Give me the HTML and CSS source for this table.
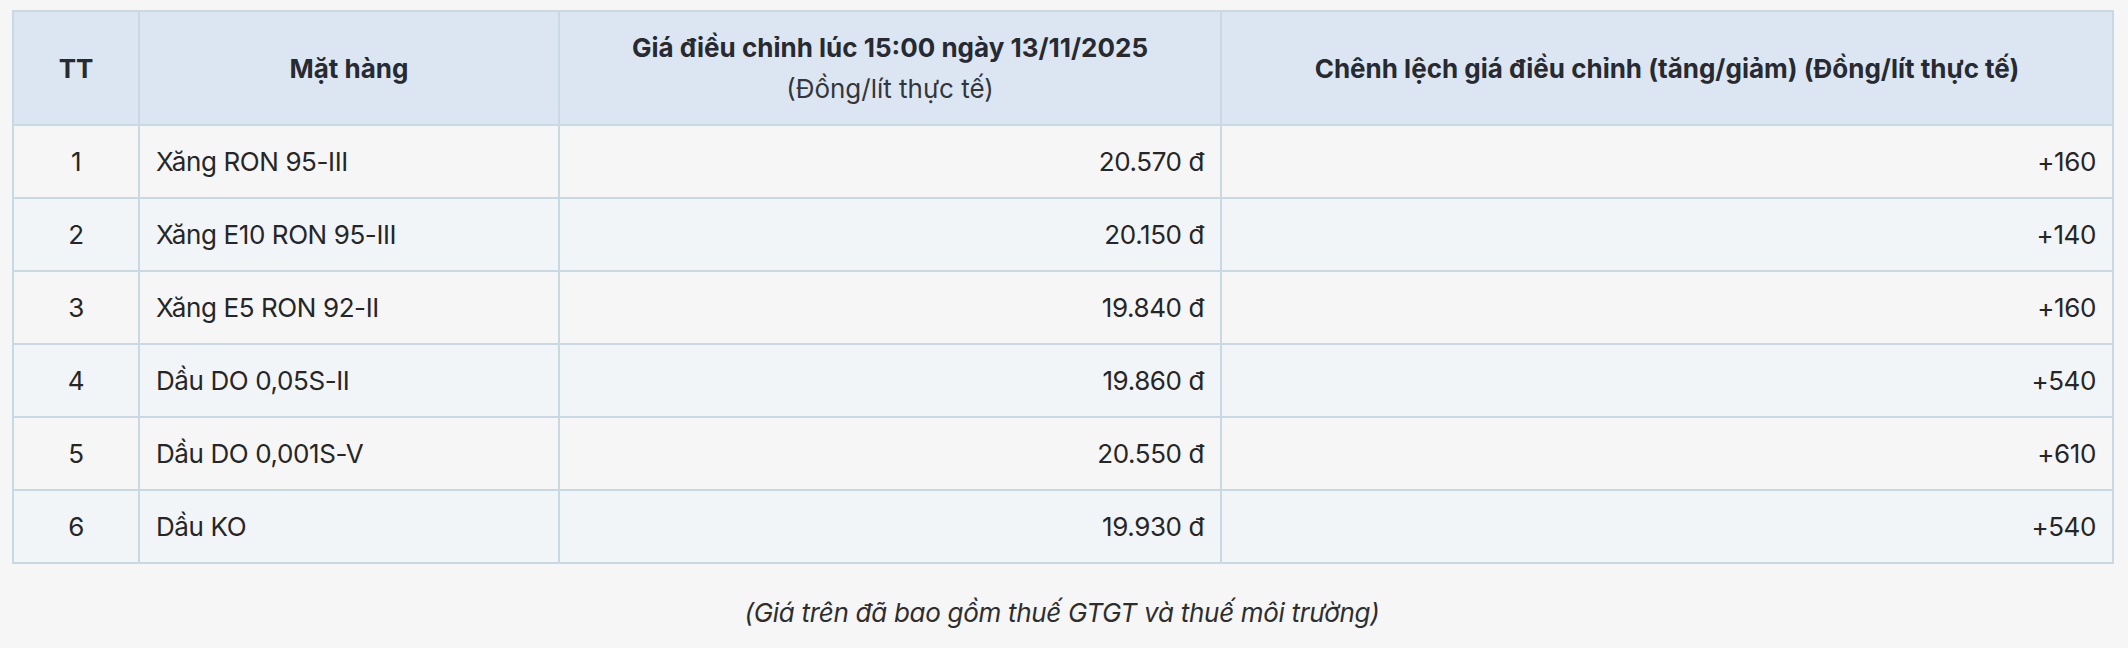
FILE: index.html
```html
<!DOCTYPE html>
<html lang="vi">
<head>
<meta charset="utf-8">
<title>Giá xăng dầu</title>
<link rel="stylesheet" href="styles.css">
</head>
<body>
<div class="wrap">
  <table class="price-table">
    <colgroup>
      <col class="c-tt">
      <col class="c-name">
      <col class="c-price">
      <col class="c-diff">
    </colgroup>
    <thead>
      <tr>
        <th>TT</th>
        <th>Mặt hàng</th>
        <th>Giá điều chỉnh lúc 15:00 ngày 13/11/2025<br><span class="sub">(Đồng/lít thực tế)</span></th>
        <th>Chênh lệch giá điều chỉnh (tăng/giảm) (Đồng/lít thực tế)</th>
      </tr>
    </thead>
    <tbody>
      <tr><td class="center">1</td><td>Xăng RON 95-III</td><td class="right">20.570 đ</td><td class="right">+160</td></tr>
      <tr><td class="center">2</td><td>Xăng E10 RON 95-III</td><td class="right">20.150 đ</td><td class="right">+140</td></tr>
      <tr><td class="center">3</td><td>Xăng E5 RON 92-II</td><td class="right">19.840 đ</td><td class="right">+160</td></tr>
      <tr><td class="center">4</td><td>Dầu DO 0,05S-II</td><td class="right">19.860 đ</td><td class="right">+540</td></tr>
      <tr><td class="center">5</td><td>Dầu DO 0,001S-V</td><td class="right">20.550 đ</td><td class="right">+610</td></tr>
      <tr><td class="center">6</td><td>Dầu KO</td><td class="right">19.930 đ</td><td class="right">+540</td></tr>
    </tbody>
  </table>
  <p class="note">(Giá trên đã bao gồm thuế GTGT và thuế môi trường)</p>
</div>
</body>
</html>
```
FILE: styles.css
```css
html, body {
  margin: 0;
  padding: 0;
  background: #f6f6f6;
}
body {
  font-family: Inter, "Noto Sans", "Liberation Sans", sans-serif;
  font-size: 26px;
  color: #262626;
}
.wrap {
  padding: 10px 16px 0 12px;
}
.price-table {
  width: 2100px;
  border-collapse: collapse;
  table-layout: fixed;
}
.c-tt { width: 126px; }
.c-name { width: 420px; }
.c-price { width: 662px; }
.c-diff { width: 892px; }
.price-table th,
.price-table td {
  border: 2px solid #c9d9e4;
  padding: 15px 16px;
  line-height: 41px;
}
.price-table td {
  letter-spacing: -0.4px;
}
.price-table th {
  background: #dce6f2;
  font-weight: 700;
  text-align: center;
  color: #272a30;
}
.price-table th .sub {
  font-weight: 400;
  color: #33363b;
}
.price-table tbody tr:nth-child(odd) td {
  background: #f6f6f6;
}
.price-table tbody tr:nth-child(even) td {
  background: #f1f5f8;
}
.center { text-align: center; }
.right { text-align: right; }
.note {
  margin: 28px 0 0 0;
  text-align: center;
  font-style: italic;
  line-height: 42px;
  letter-spacing: -0.3px;
  color: #2e2e2e;
}
```
